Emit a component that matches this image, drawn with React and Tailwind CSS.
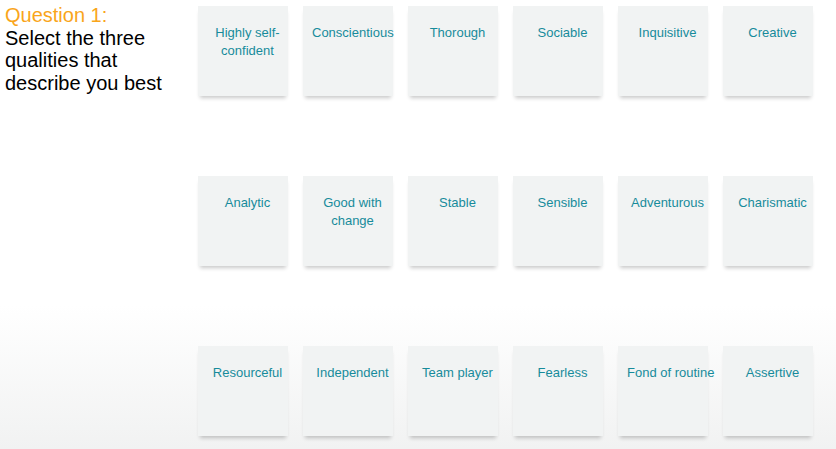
// Quiz de cualidades: pregunta a la izquierda, rejilla de opciones a la derecha.
const QUALITIES = [
  "Highly self-confident",
  "Conscientious",
  "Thorough",
  "Sociable",
  "Inquisitive",
  "Creative",
  "Analytic",
  "Good with change",
  "Stable",
  "Sensible",
  "Adventurous",
  "Charismatic",
  "Resourceful",
  "Independent",
  "Team player",
  "Fearless",
  "Fond of routine",
  "Assertive",
];

export default function App() {
  return (
    <div
      className="w-[836px] h-[449px] overflow-hidden bg-[linear-gradient(to_bottom,#ffffff_0%,#ffffff_68%,#f1f2f2_100%)] flex items-start"
      style={{ fontFamily: '"Liberation Sans", Arial, sans-serif' }}
    >
      {/* Texto de la pregunta */}
      <div className="w-[198px] shrink-0 pl-[5px] pt-[4px] text-[20px] leading-[22.5px]">
        <div className="text-[#f9a51b]">Question 1:</div>
        <div className="text-black">
          Select the three
          <br />
          qualities that
          <br />
          describe you best
        </div>
      </div>
      {/* Rejilla de cualidades */}
      <div className="grid grid-cols-[repeat(6,90px)] content-start gap-x-[15px] gap-y-[80px] pt-[6px]">
        {QUALITIES.map((q) => (
          <div
            key={q}
            className="w-[90px] h-[90px] bg-[#f1f3f3] pl-[9px] pt-[18px] text-center text-[13px] leading-[18px] text-[#178b9b] shadow-[0_4px_4px_-2px_rgba(0,0,0,0.22)] cursor-pointer"
          >
            {q === "Highly self-confident" ? (
              <>
                Highly self-
                <br />
                confident
              </>
            ) : q === "Good with change" ? (
              <>
                Good with
                <br />
                change
              </>
            ) : (
              <span className="whitespace-nowrap">{q}</span>
            )}
          </div>
        ))}
      </div>
    </div>
  );
}
